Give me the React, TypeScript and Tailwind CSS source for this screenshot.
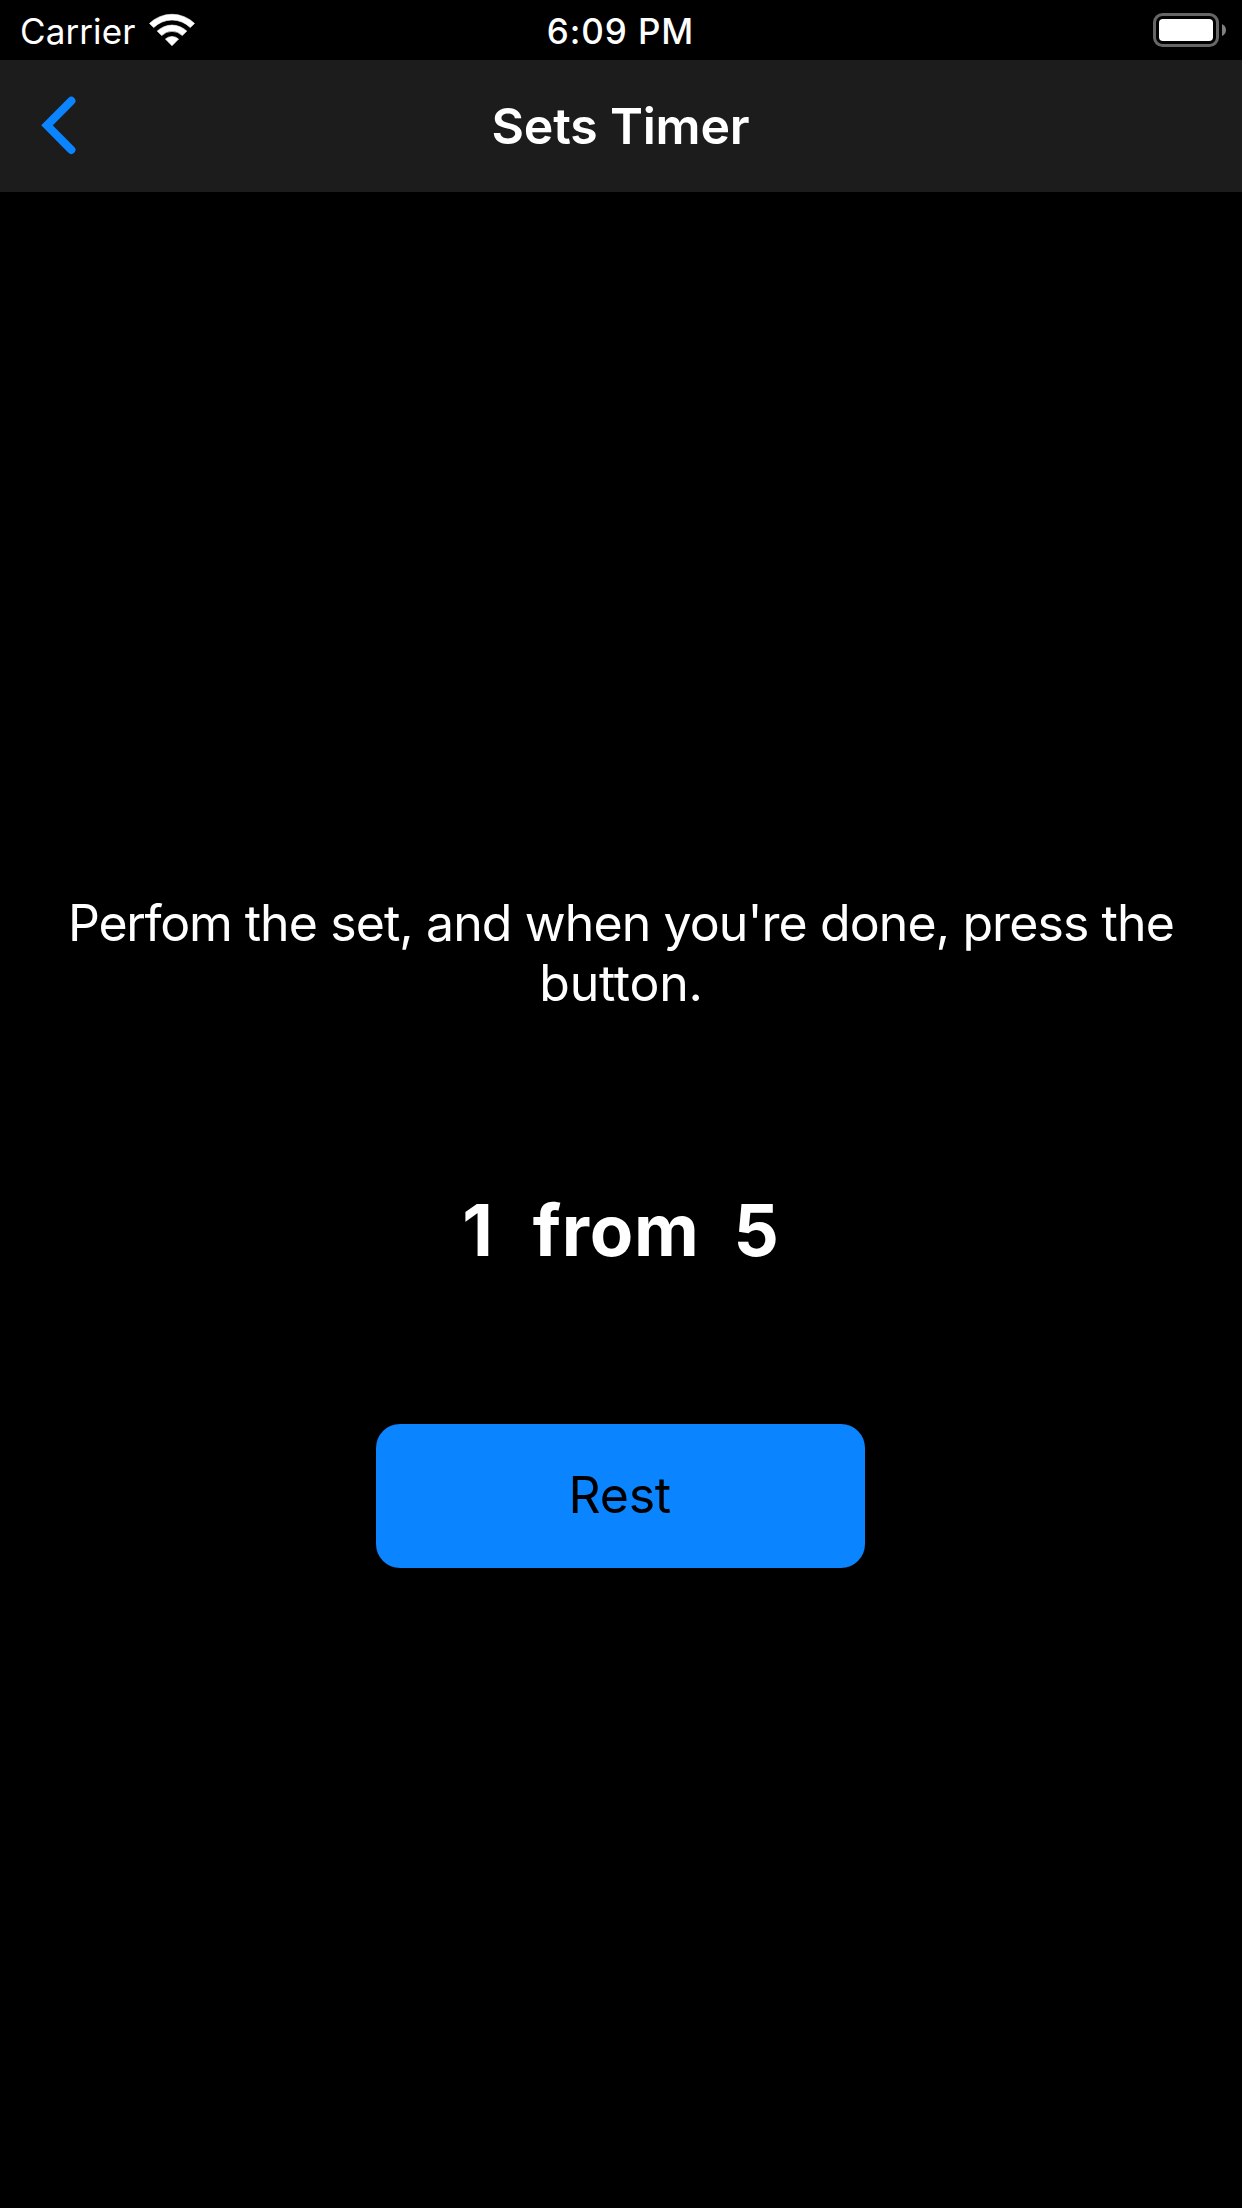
export default function App() {
  return (
    <div className="flex h-[2208px] w-[1242px] flex-col bg-black font-['Inter',sans-serif] text-white">
      <header className="grid h-[60px] grid-cols-3 items-center">
        <div className="flex items-center pl-[20px]">
          <span className="w-[129px] pt-[2px] text-[35px] leading-none tracking-[0.1px]">Carrier</span>
          <svg className="h-[34px] w-[46px]" viewBox="0 0 46 34" fill="#fff" stroke="#fff" strokeWidth="0.6" strokeLinejoin="round">
            <path d="M0.500 10.400A32.300 32.300 0 0 1 45.500 10.400L41.300 14.600A25.900 25.900 0 0 0 4.700 14.600Z" />
            <path d="M8.200 18.100A21.300 21.300 0 0 1 37.800 18.100L33.300 22.600A14.600 14.600 0 0 0 12.700 22.600Z" />
            <path d="M16.400 26.100A9.500 9.500 0 0 1 29.600 26.100L23 32.700Z" />
          </svg>
        </div>
        <span className="pt-[2px] pr-px text-center text-[35px] leading-none font-medium tracking-[0.9px]">6:09 PM</span>
        <svg className="mr-[16px] h-[34px] w-[73px] justify-self-end" viewBox="0 0 73 34">
          <rect x="1.500" y="1.500" width="63" height="31" rx="8" fill="none" stroke="#666" strokeWidth="3" />
          <rect x="6" y="6" width="54" height="22" rx="4" fill="#fff" />
          <path d="M69 11q4 2 4 6t-4 6z" fill="#808080" />
        </svg>
      </header>
      <nav className="grid h-[132px] grid-cols-3 items-center bg-[#1c1c1c]">
        <svg className="ml-[40px] h-[60px] w-[38px]" viewBox="0 0 38 60" fill="none" stroke="#0a84ff" strokeWidth="8.200" strokeLinecap="round">
          <path d="M31.300 4.800L7 29.300L31.300 53.800" />
        </svg>
        <h1 className="pr-px text-center text-[50px] leading-none font-semibold tracking-[-0.2px]">Sets Timer</h1>
      </nav>
      <main className="flex flex-col items-center pt-[701px]">
        <p className="text-center text-[50px] leading-[60px] tracking-[-0.9px]">
          <span className="tracking-[-1.300px]">Perfom</span> the set, and when you're done, press the
          <br />
          <span className="tracking-[-0.25px]">button.</span>
        </p>
        <h2 className="mt-[174px] flex text-[71px] leading-[86px] font-bold tracking-[0.8px]">
          <span className="mr-[39px]">1</span>
          <span className="mr-[34px]">from</span>
          <span>5</span>
        </h2>
        <button className="mt-[150.500px] mr-[0.5px] h-[144px] w-[489px] rounded-[24px] bg-[#0a84ff] pr-[2px] text-[50px] tracking-[-0.2px] text-black">
          Rest
        </button>
      </main>
    </div>
  );
}
